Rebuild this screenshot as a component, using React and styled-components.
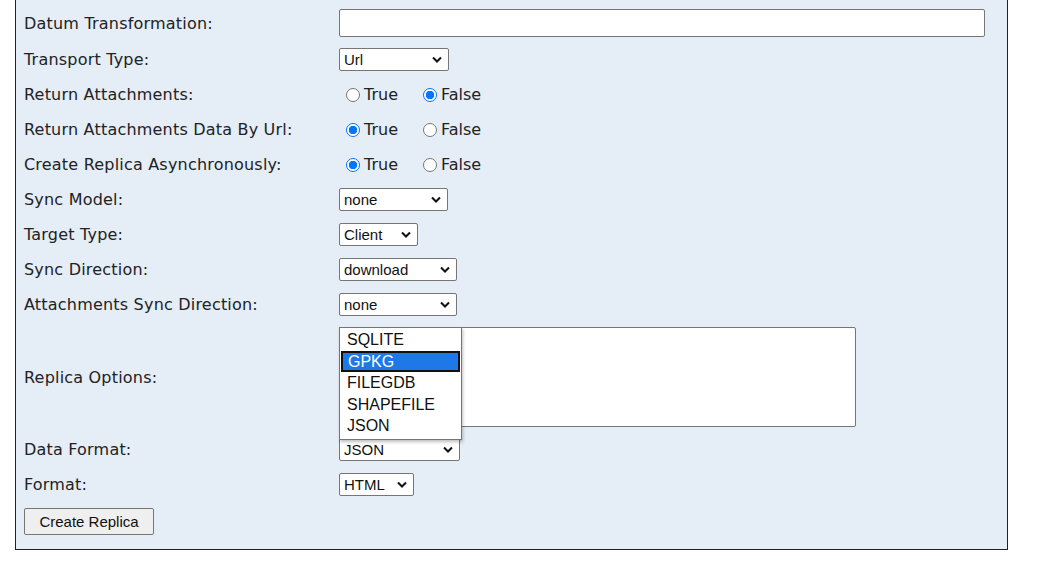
import React from "react";
import styled, { createGlobalStyle } from "styled-components";

const Global = createGlobalStyle`
  body { margin: 0; background: #fff; font-family: "DejaVu Sans", Verdana, sans-serif; }
`;

const Panel = styled.div`
  margin-left: 15px;
  width: 991px;
  background: #e5edf7;
  border: 1px solid #222;
  border-top: none;
  padding: 4px 0 9px 0;
`;

const Row = styled.div`
  display: flex;
  align-items: center;
  height: ${p => p.h || 35}px;
  padding-left: 8px;
`;

const Label = styled.div`
  width: 315px;
  flex: none;
  font-size: 16px;
  color: #222;
  letter-spacing: 0.2px;
`;

const Controls = styled.div`
  display: flex;
  align-items: center;
  position: relative;
`;

const TextInput = styled.div`
  width: 644px;
  height: 26px;
  background: #fff;
  border: 1px solid #767676;
  border-radius: 2px;
`;

const Select = styled.div`
  box-sizing: border-box;
  width: ${p => p.w}px;
  height: 23px;
  background: #fff;
  border: 1px solid #767676;
  border-radius: 2px;
  display: flex;
  align-items: center;
  justify-content: space-between;
  padding: 0 6px 0 4px;
  font-family: "Liberation Sans", Arial, sans-serif;
  font-size: 15px;
  color: #111;
`;

const Chevron = () => (
  <svg width="10" height="7" viewBox="0 0 10 7">
    <path d="M1 1.5 L5 5.5 L9 1.5" fill="none" stroke="#111" strokeWidth="2" />
  </svg>
);

const RadioDot = styled.span`
  box-sizing: border-box;
  width: 14px;
  height: 14px;
  border-radius: 50%;
  border: 1px solid ${p => (p.on ? "#0075ff" : "#767676")};
  background: ${p => (p.on ? "radial-gradient(circle, #0075ff 0 4px, #fff 4.5px)" : "#fff")};
  margin: 0 4px 0 7px;
`;

const RadioText = styled.span`
  font-size: 16px;
  color: #222;
  width: ${p => p.w}px;
`;

const TextArea = styled.div`
  box-sizing: border-box;
  width: 517px;
  height: 100px;
  background: #fff;
  border: 1px solid #767676;
  border-radius: 2px;
`;

const ListBox = styled.div`
  position: absolute;
  left: 0;
  top: 0;
  width: 121px;
  background: #fff;
  border: 1px solid #767676;
  box-shadow: 1px 2px 3px rgba(0, 0, 0, 0.25);
  font-family: "Liberation Sans", Arial, sans-serif;
  font-size: 16px;
  padding: 1px 0 2px;
`;

const Option = styled.div`
  height: 21.5px;
  line-height: 21px;
  padding-left: ${p => (p.sel ? 5 : 6)}px;
  margin: 0 1px;
  box-sizing: border-box;
  color: ${p => (p.sel ? "#fff" : "#111")};
  background: ${p => (p.sel ? "#1e78e8" : "transparent")};
  border: ${p => (p.sel ? "2px solid #111" : "none")};
  line-height: ${p => (p.sel ? 17 : 21)}px;
`;

const Button = styled.div`
  box-sizing: border-box;
  width: 130px;
  height: 27px;
  border: 1px solid #767676;
  border-radius: 2px;
  background: #efefef;
  font-family: "Liberation Sans", Arial, sans-serif;
  font-size: 15px;
  color: #111;
  display: flex;
  align-items: center;
  justify-content: center;
`;

const Sel = ({ w, v }) => (
  <Select w={w}>
    <span>{v}</span>
    <Chevron />
  </Select>
);

const Radios = ({ on }) => (
  <Controls>
    <RadioDot on={on === true} />
    <RadioText w={52}>True</RadioText>
    <RadioDot on={on === false} />
    <RadioText>False</RadioText>
  </Controls>
);

export default function App() {
  return (
    <>
      <Global />
      <Panel>
        <Row h={38}>
          <Label>Datum Transformation:</Label>
          <TextInput />
        </Row>
        <Row>
          <Label>Transport Type:</Label>
          <Sel w={110} v="Url" />
        </Row>
        <Row>
          <Label>Return Attachments:</Label>
          <Radios on={false} />
        </Row>
        <Row>
          <Label>Return Attachments Data By Url:</Label>
          <Radios on={true} />
        </Row>
        <Row>
          <Label>Create Replica Asynchronously:</Label>
          <Radios on={true} />
        </Row>
        <Row>
          <Label>Sync Model:</Label>
          <Sel w={109} v="none" />
        </Row>
        <Row>
          <Label>Target Type:</Label>
          <Sel w={79} v="Client" />
        </Row>
        <Row>
          <Label>Sync Direction:</Label>
          <Sel w={118} v="download" />
        </Row>
        <Row>
          <Label>Attachments Sync Direction:</Label>
          <Sel w={118} v="none" />
        </Row>
        <Row h={110}>
          <Label>Replica Options:</Label>
          <Controls>
            <TextArea />
            <ListBox>
              <Option>SQLITE</Option>
              <Option sel>GPKG</Option>
              <Option>FILEGDB</Option>
              <Option>SHAPEFILE</Option>
              <Option>JSON</Option>
            </ListBox>
          </Controls>
        </Row>
        <Row>
          <Label>Data Format:</Label>
          <Sel w={121} v="JSON" />
        </Row>
        <Row>
          <Label>Format:</Label>
          <Sel w={75} v="HTML" />
        </Row>
        <Row h={38}>
          <Button>Create Replica</Button>
        </Row>
      </Panel>
    </>
  );
}
